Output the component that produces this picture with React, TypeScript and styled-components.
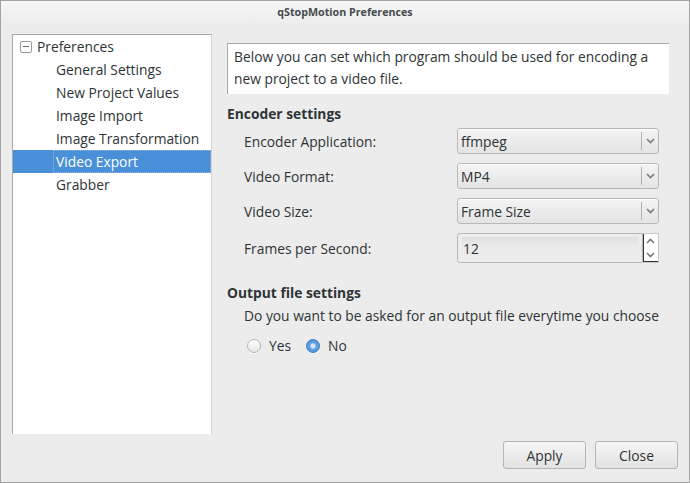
import React from "react";
import styled, { createGlobalStyle } from "styled-components";

const Global = createGlobalStyle`
  html, body { margin: 0; padding: 0; background: #ececec; }
  body { font-family: "Open Sans", "Noto Sans", sans-serif; }
  * { box-sizing: border-box; }
`;

const Window = styled.div`
  width: 690px;
  height: 483px;
  border: 1px solid #a3a3a3;
  background: #ececec;
  display: flex;
  flex-direction: column;
  color: #2e3436;
  font-size: 13.8px;
  overflow: hidden;
`;

const TitleBar = styled.div`
  height: 24px;
  flex: none;
  display: flex;
  align-items: center;
  justify-content: center;
  background: linear-gradient(#f7f7f7, #ececec);
  font-size: 10.7px;
  font-weight: bold;
  color: #454b4e;
  padding-bottom: 2px;
`;

const Body = styled.div`
  flex: 1;
  display: flex;
  padding: 9px 20px 0 11px;
  gap: 15px;
`;

const Tree = styled.div`
  width: 200px;
  height: 400px;
  flex: none;
  background: #fff;
  border-top: 1px solid #a9a9a9;
  border-left: 1px solid #a9a9a9;
  border-right: 1px solid #d4d4d4;
`;

const TreeRow = styled.div<{ $child?: boolean; $selected?: boolean }>`
  height: 23px;
  display: flex;
  align-items: center;
  padding-left: ${(p) => (p.$child ? "43px" : "7px")};
  background: ${(p) => (p.$selected ? "#4a90d9" : "transparent")};
  color: ${(p) => (p.$selected ? "#fff" : "#2e3436")};
  white-space: nowrap;
  position: relative;
`;

const FocusRing = styled.div`
  position: absolute;
  left: 40px;
  top: 0;
  right: 0;
  bottom: 0;
  border: 1px dotted #9ab9e0;
`;

const Expander = styled.span`
  width: 12px;
  height: 12px;
  border: 1px solid #9a9a9a;
  border-radius: 2px;
  display: inline-flex;
  align-items: center;
  justify-content: center;
  margin-right: 5px;
  &::after {
    content: "";
    width: 6px;
    height: 1px;
    background: #6a6a6a;
  }
`;

const Panel = styled.div`
  flex: 1;
  display: flex;
  flex-direction: column;
  padding-top: 9px;
`;

const Description = styled.div`
  background: #fff;
  border-top: 1px solid #a9a9a9;
  border-left: 1px solid #a9a9a9;
  padding: 2px 6px 3px 6px;
  line-height: 22px;
  height: 51px;
`;

const SectionTitle = styled.div<{ $gap?: number }>`
  font-weight: bold;
  margin-top: ${(p) => p.$gap ?? 10}px;
  height: 20px;
  line-height: 20px;
`;

const FormGrid = styled.div`
  display: grid;
  grid-template-columns: 213px 202px;
  row-gap: 9px;
  padding-left: 17px;
  margin-top: 4px;
`;

const Label = styled.div`
  display: flex;
  align-items: center;
`;

const Combo = styled.div`
  height: 26px;
  border: 1px solid #b8b8b8;
  border-radius: 3px;
  background: linear-gradient(#f4f4f4, #e4e4e4);
  display: flex;
  align-items: center;
  padding-left: 3px;
  box-shadow: inset 0 1px 0 #fff;
`;

const ComboText = styled.div`
  flex: 1;
`;

const ComboArrow = styled.div`
  width: 17px;
  height: 18px;
  border-left: 1px solid #b0b0b0;
  display: flex;
  align-items: center;
  justify-content: center;
`;

const Spin = styled.div`
  height: 30px;
  display: flex;
`;

const SpinField = styled.div`
  flex: 1;
  border: 1px solid #b8b8b8;
  border-radius: 3px 0 0 3px;
  background: #ececec;
  display: flex;
  align-items: center;
  padding: 3px 4px;
`;

const SpinInner = styled.div`
  flex: 1;
  height: 100%;
  background: linear-gradient(#dedede, #ebebeb 40%, #ececec);
  display: flex;
  align-items: center;
  padding-left: 1px;
`;

const SpinButtons = styled.div`
  width: 16px;
  background: #fff;
  border: 1px solid #c8c8c8;
  border-left: none;
  display: flex;
  flex-direction: column;
  align-items: center;
  justify-content: space-around;
  border-top-right-radius: 1px;
  box-shadow: 1px -1px 0 #333 inset;
`;

const Indented = styled.div`
  padding-left: 17px;
  margin-top: 3px;
  white-space: nowrap;
  overflow: hidden;
  height: 20px;
  line-height: 20px;
  width: 432px;
`;

const RadioRow = styled.div`
  display: flex;
  align-items: center;
  padding-left: 20px;
  margin-top: 10px;
  gap: 15px;
`;

const RadioItem = styled.label`
  display: flex;
  align-items: center;
  gap: 8px;
`;

const RadioCircle = styled.span<{ $checked?: boolean }>`
  width: 14px;
  height: 14px;
  border-radius: 50%;
  border: 1px solid ${(p) => (p.$checked ? "#3e7ec0" : "#b4b4b4")};
  background: ${(p) =>
    p.$checked
      ? "radial-gradient(circle at 50% 50%, #d6e8fc 0 2px, #6aa6e4 3px, #3d86d6 100%)"
      : "linear-gradient(#ffffff, #e6e6e6)"};
  box-shadow: 0 1px 0 rgba(255,255,255,0.8);
`;

const Footer = styled.div`
  display: flex;
  justify-content: flex-end;
  gap: 9px;
  padding: 0 11px 13px 0;
`;

const Button = styled.button`
  width: 83px;
  height: 28px;
  border: 1px solid #b5b5b5;
  border-radius: 3px;
  background: linear-gradient(#f6f6f6, #e2e2e2);
  font-family: inherit;
  font-size: 13.8px;
  color: #2e3436;
  padding: 0;
`;

const Chevron = ({ up }: { up?: boolean }) => (
  <svg width="9" height="6" viewBox="0 0 9 6">
    <path
      d={up ? "M1 5 L4.5 1.5 L8 5" : "M1 1 L4.5 4.5 L8 1"}
      fill="none"
      stroke="#7a7a7a"
      strokeWidth="1.6"
    />
  </svg>
);

const ComboBox = ({ value }: { value: string }) => (
  <Combo>
    <ComboText>{value}</ComboText>
    <ComboArrow>
      <Chevron />
    </ComboArrow>
  </Combo>
);

export default function App() {
  const children = [
    "General Settings",
    "New Project Values",
    "Image Import",
    "Image Transformation",
    "Video Export",
    "Grabber",
  ];
  return (
    <>
      <Global />
      <Window>
        <TitleBar>qStopMotion Preferences</TitleBar>
        <Body>
          <Tree>
            <TreeRow>
              <Expander />
              Preferences
            </TreeRow>
            {children.map((c) => (
              <TreeRow key={c} $child $selected={c === "Video Export"}>
                {c}
                {c === "Video Export" && <FocusRing />}
              </TreeRow>
            ))}
          </Tree>
          <Panel>
            <Description>
              Below you can set which program should be used for encoding a new
              project to a video file.
            </Description>
            <SectionTitle>Encoder settings</SectionTitle>
            <FormGrid>
              <Label>Encoder Application:</Label>
              <ComboBox value="ffmpeg" />
              <Label>Video Format:</Label>
              <ComboBox value="MP4" />
              <Label>Video Size:</Label>
              <ComboBox value="Frame Size" />
              <Label>Frames per Second:</Label>
              <Spin>
                <SpinField>
                  <SpinInner>12</SpinInner>
                </SpinField>
                <SpinButtons>
                  <Chevron up />
                  <Chevron />
                </SpinButtons>
              </Spin>
            </FormGrid>
            <SectionTitle $gap={20}>Output file settings</SectionTitle>
            <Indented>
              Do you want to be asked for an output file everytime you choose
            </Indented>
            <RadioRow>
              <RadioItem>
                <RadioCircle />
                Yes
              </RadioItem>
              <RadioItem>
                <RadioCircle $checked />
                No
              </RadioItem>
            </RadioRow>
          </Panel>
        </Body>
        <Footer>
          <Button>Apply</Button>
          <Button>Close</Button>
        </Footer>
      </Window>
    </>
  );
}
